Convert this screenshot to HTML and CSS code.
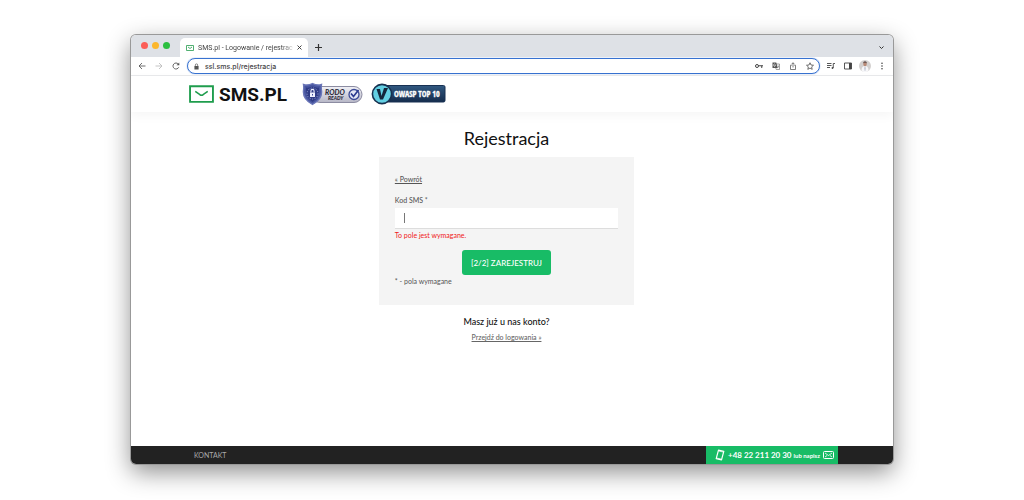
FILE: index.html
```html
<!DOCTYPE html>
<html lang="pl">
<head>
  <meta charset="UTF-8">
  <title>SMS.pl - Logowanie / rejestracja</title>
  <meta name="viewport" content="width=device-width, initial-scale=1.0">
  <link rel="stylesheet" href="styles.css">
</head>
<body>

  <div class="window">

    <!-- Tabs -->
    <div class="tabs">
      <div class="lights">
        <span class="light red"></span>
        <span class="light yellow"></span>
        <span class="light green"></span>
      </div>
      <div class="tab">
        <svg class="favicon" viewBox="0 0 24 18" fill="none" stroke="#35a35c" stroke-width="2.6"><path d="M1.5 1.5h21v15h-21zM6 6l6 4.500 6-4.500"/></svg>
        <span class="tab-title">SMS.pl - Logowanie / rejestrac</span>
        <button class="icon-btn" aria-label="Zamknij kartę"><svg class="small-icon" viewBox="0 0 10 10" fill="none" stroke="#333" stroke-width="1.800"><path d="M1 1l8 8M9 1l-8 8"/></svg></button>
      </div>
      <button class="icon-btn new-tab" aria-label="Nowa karta"><svg class="plus-icon" viewBox="0 0 10 10" fill="none" stroke="#333" stroke-width="1.700"><path d="M5 0v10M0 5h10"/></svg></button>
      <button class="icon-btn tabs-more" aria-label="Szukaj kart"><svg class="small-icon" viewBox="0 0 10 10" fill="none" stroke="#333" stroke-width="2"><path d="M1 3l4 4 4-4"/></svg></button>
    </div>

    <!-- Toolbar -->
    <div class="toolbar">
      <button class="icon-btn" aria-label="Wstecz"><svg class="icon" viewBox="0 0 16 16" fill="none" stroke="#555" stroke-width="1.700"><path d="M15 8H2M8 2L2 8l6 6"/></svg></button>
      <button class="icon-btn" aria-label="Dalej"><svg class="icon" viewBox="0 0 16 16" fill="none" stroke="#bbb" stroke-width="1.700"><path d="M1 8h13M8 2l6 6-6 6"/></svg></button>
      <button class="icon-btn" aria-label="Odśwież"><svg class="icon" viewBox="0 0 16 16" fill="none" stroke="#555" stroke-width="1.800"><path d="M13.500 10.500A6 6 0 1 1 12.500 4L14 6"/><path d="M14.500 1v5.500H9z" fill="#555" stroke="none"/></svg></button>
      <div class="address">
        <svg class="lock" viewBox="0 0 12 16" fill="#555"><path d="M1 6.500h10V15H1z"/><path d="M3.200 7V4.500a2.800 2.800 0 0 1 5.600 0V7" fill="none" stroke="#555" stroke-width="1.600"/></svg>
        <input class="url" type="text" value="ssl.sms.pl/rejestracja" aria-label="Adres strony">
        <button class="icon-btn" aria-label="Hasła"><svg class="icon" viewBox="0 0 16 16" fill="none" stroke="#444" stroke-width="2"><circle cx="4" cy="8" r="3"/><path d="M7 7.500h9M13.500 7.500V12"/></svg></button>
        <button class="icon-btn" aria-label="Przetłumacz"><svg class="icon" viewBox="0 0 16 16"><path d="M7.500 4H15v11H8.500l-1-3" fill="#fff" stroke="#666" stroke-width="1.200"/><path d="M1 1h7.500l3 11H1z" fill="#555"/><path d="M7 5a2.300 2.300 0 1 0 .3 2H5" fill="none" stroke="#fff" stroke-width="1.200"/><path d="M11 8h3M13.500 8c-.5 2-1.500 3.500-3 4.500" fill="none" stroke="#666"/></svg></button>
        <button class="icon-btn" aria-label="Udostępnij"><svg class="icon" viewBox="0 0 16 16" fill="none" stroke="#555" stroke-width="1.500"><path d="M5.500 6.500H3V15h10V6.500h-2.500M8 11V1.500M5 4.500l3-3 3 3"/></svg></button>
        <button class="icon-btn" aria-label="Dodaj zakładkę"><svg class="icon" viewBox="0 0 16 16" fill="none" stroke="#444" stroke-width="1.500"><path d="M8 1.500l2 4.500 5 .5-3.700 3.300 1.100 4.900L8 12.200l-4.400 2.500 1.100-4.900L1 6.500 6 6z"/></svg></button>
      </div>
      <button class="icon-btn" aria-label="Multimedia"><svg class="icon" viewBox="0 0 16 16" fill="none" stroke="#444" stroke-width="1.800"><path d="M0 3h9M0 7h9M0 11h6M12.500 12V3H16"/><circle cx="11" cy="12" r="1.800" fill="#444" stroke="none"/></svg></button>
      <button class="icon-btn" aria-label="Panel boczny"><svg class="icon" viewBox="0 0 16 16"><path d="M1 2h14v12H1z" fill="none" stroke="#444" stroke-width="1.800"/><path d="M10 2h5v12h-5z" fill="#444"/></svg></button>
      <button class="icon-btn profile" aria-label="Profil"><svg class="avatar" viewBox="0 0 24 24"><circle cx="12" cy="12" r="12" fill="#d3d0cf"/><path d="M5 22c0-7 2-10 7-10s7 3 7 10a12 12 0 0 1-14 0z" fill="#f7f7f9"/><path d="M12 12l1.500 4-1 6h-1l-1-6z" fill="#b6bccb"/><ellipse cx="12" cy="8" rx="3.500" ry="4.500" fill="#b98a76"/><path d="M8.300 7c0-6 7.400-6 7.400 0l-2-1.500H10z" fill="#5b4a48"/></svg></button>
      <button class="icon-btn" aria-label="Menu"><svg class="icon" viewBox="0 0 16 16" fill="#444"><circle cx="8" cy="2.500" r="1.600"/><circle cx="8" cy="8" r="1.600"/><circle cx="8" cy="13.500" r="1.600"/></svg></button>
    </div>

    <!-- Site header -->
    <header class="header">
      <a class="logo" href="#">
        <svg class="logo-icon" viewBox="0 0 24 17" fill="none" stroke="#1f9d4d"><path d="M1 1h22v15H1z" stroke-width="1.800"/><path d="M6 6l4.500 3.200q1.500 1 3 0L18 6" stroke-width="1.500"/></svg>
        SMS.PL
      </a>
      <svg class="badge-rodo" viewBox="0 0 62 24" role="img" aria-label="RODO Ready">
        <defs>
          <linearGradient id="silver" x1="0" y1="0" x2="0" y2="1"><stop offset="0" stop-color="#f1f1f6"/><stop offset="1" stop-color="#b6b6c6"/></linearGradient>
        </defs>
        <rect x="10" y="4.500" width="50" height="16" rx="8" fill="url(#silver)" stroke="#8c8ca2"/>
        <path d="M10.500 1.500Q15 4 19.500 2.500q-.5 3 0 6Q20.500 17 10.500 22.500.5 17 1.500 8.500q.5-3 0-6Q6 4 10.500 1.500z" fill="#4856a0" stroke="#6a76b8" stroke-width="1.400"/>
        <path d="M10.500 4.500q3.500 1.500 6.500 1Q18.500 15.500 10.500 20 2.500 15.500 4 5.500q3 .5 6.500-1z" fill="#2f3b86"/>
        <circle cx="10.500" cy="11.500" r="5.500" fill="none" stroke="#a5aedd" stroke-dasharray="1 1.600"/>
        <path d="M8 10.500h5V15H8z" fill="#eef0ff"/>
        <path d="M8.900 10.500V9a1.600 1.600 0 0 1 3.200 0v1.500" fill="none" stroke="#eef0ff" stroke-width="1.100"/>
        <path d="M10.500 12v1.500" stroke="#3c4a96"/>
        <text class="rodo-name" x="23" y="12.500">RODO</text>
        <text class="rodo-sub" x="26" y="17.500">READY</text>
        <circle cx="52" cy="12.500" r="5" fill="#e3e6f5" stroke="#3c4a96" stroke-width="1.300"/>
        <path d="M49 11.500l2.500 3 5-6.500" fill="none" stroke="#2b3b91" stroke-width="1.700"/>
      </svg>
      <svg class="badge-owasp" viewBox="0 0 76 22" role="img" aria-label="OWASP Top 10">
        <defs>
          <linearGradient id="navy" x1="0" y1="0" x2="0" y2="1"><stop offset="0" stop-color="#315981"/><stop offset="1" stop-color="#152c4d"/></linearGradient>
        </defs>
        <rect x="11" y="2.500" width="63" height="16.500" rx="1.500" fill="url(#navy)" stroke="#183153"/>
        <circle cx="11" cy="11" r="9.600" fill="#63cfe3" stroke="#17304f" stroke-width="1.600"/>
        <path d="M5.500 6H9l1.500 7L13 5h4l-5 11.500H9z" fill="#13263c"/>
        <text class="owasp-name" x="23" y="14">OWASP TOP 10</text>
      </svg>
    </header>

    <!-- Registration form -->
    <main class="main">
      <h1>Rejestracja</h1>
      <form class="card">
        <a class="back" href="#">« Powrót</a>
        <label for="code">Kod SMS *</label>
        <input class="code" id="code" type="text" aria-describedby="code-error">
        <p class="error" id="code-error">To pole jest wymagane.</p>
        <button class="submit" type="button">[2/2] ZAREJESTRUJ</button>
        <p class="note">* - pola wymagane</p>
      </form>
      <h2>Masz już u nas konto?</h2>
      <a class="login" href="#">Przejdź do logowania »</a>
    </main>

    <footer class="footer">
      <a class="contact" href="#">KONTAKT</a>
      <a class="phone" href="#">
        <svg class="phone-icon" viewBox="0 0 10 12" fill="none" stroke="#fff"><path d="M3.500 1.200l5.300 1.200-2.300 8.400-5.300-1.200z" stroke-width="1.200" stroke-linejoin="round"/><path d="M3.500 2l5 1.100M1.500 9l5 1.100" stroke-width=".7"/></svg>
        <span class="number">+48 22 211 20 30</span>
        <span class="write">lub napisz</span>
        <svg class="mail-icon" viewBox="0 0 11 8" fill="none" stroke="#fff"><rect x=".5" y=".5" width="10" height="7" rx="1"/><path d="M2 2l3.500 2.500L9 2M2 6l2-1.500M9 6L7 4.500" stroke-width=".8"/></svg>
      </a>
    </footer>
  </div>

</body>
</html>
```
FILE: styles.css
```css
* {
  box-sizing: border-box;
}

body {
  margin: 0;
  padding: 35px 131px 36px;
  min-height: 100vh;
  display: flex;
  background: #fff;
  color: #111;
  font-family: Lato, "Liberation Sans", sans-serif;
}

h1, h2, p {
  margin: 0;
  font-weight: 400;
}

.window {
  flex: 1;
  display: flex;
  flex-direction: column;
  overflow: hidden;
  background: #fff;
  border-radius: 5px;
  box-shadow: 0 0 0 1px #999, 0 8px 24px rgba(0, 0, 0, 0.45);
}

/* Buttons and icons */
.icon-btn {
  display: flex;
  padding: 0;
  border: none;
  background: none;
}

.icon {
  width: 8px;
  height: 8px;
}

.small-icon {
  width: 5px;
  height: 5px;
}

.plus-icon {
  width: 7px;
  height: 7px;
}

/* Tabs */
.tabs {
  display: flex;
  align-items: flex-end;
  height: 22px;
  padding: 0 9px 0 10px;
  background: #dee1e6;
}

.lights {
  display: flex;
  gap: 4px;
  margin-right: 10px;
  padding-bottom: 8px;
}

.light {
  width: 7px;
  height: 7px;
  border-radius: 50%;
}

.red {
  background: #fb5d57;
}

.yellow {
  background: #fcb72d;
}

.green {
  background: #2bbf40;
}

.tab {
  display: flex;
  align-items: center;
  gap: 4px;
  height: 19px;
  padding: 0 6px;
  background: #fff;
  border-radius: 5px 5px 0 0;
  font: 7px Roboto, sans-serif;
  color: #444;
}

.favicon {
  flex: none;
  width: 8px;
  height: 6px;
}

.tab-title {
  white-space: nowrap;
  mask-image: linear-gradient(to right, #000 88%, rgba(0, 0, 0, 0.2));
}

.new-tab {
  margin-left: 7px;
  padding-bottom: 6px;
}

.tabs-more {
  margin-left: auto;
  padding-bottom: 7px;
}

/* Toolbar */
.toolbar {
  display: flex;
  align-items: center;
  gap: 9px;
  height: 19px;
  padding: 0 7px;
  border-bottom: 1px solid #e8e9eb;
}

.address {
  flex: 1;
  display: flex;
  align-items: center;
  gap: 9px;
  height: 16px;
  margin: 0 -2px;
  padding: 0 5px 0 6px;
  border: 1px solid #3872d0;
  border-radius: 8px;
  box-shadow: 0 0 1px #3872d0;
}

.lock {
  width: 5px;
  height: 7px;
}

.url {
  flex: 1;
  min-width: 0;
  height: 12px;
  margin-left: -3px;
  padding: 0;
  border: none;
  outline: none;
  background: none;
  color: #444;
  font: 500 7px Inter, Roboto, sans-serif;
}

.profile {
  margin: 0 -2px;
}

.avatar {
  width: 12px;
  height: 12px;
}

/* Site header */
.header {
  display: flex;
  align-items: center;
  height: 36px;
  padding: 0 58px;
  box-shadow: 0 4px 10px rgba(0, 0, 0, 0.04);
}

.logo {
  display: flex;
  align-items: center;
  gap: 5px;
  margin-right: 15px;
  color: #111;
  font: 700 19px Roboto, sans-serif;
  text-decoration: none;
}

.logo-icon {
  width: 25px;
  height: 18px;
}

.badge-rodo {
  width: 62px;
  height: 24px;
  margin-right: 7px;
}

.badge-owasp {
  width: 76px;
  height: 22px;
}

.rodo-name {
  font: italic 900 7px Lato, sans-serif;
  fill: #2b2b38;
}

.rodo-sub {
  font: italic 900 5px Lato, sans-serif;
  fill: #2b2b38;
}

.owasp-name {
  font: 700 8px "Liberation Sans Narrow", "Open Sans Condensed", Roboto, sans-serif;
  fill: #fff;
  stroke: #fff;
  stroke-width: 0.3;
}

/* Registration form */
.main {
  flex: 1;
  display: flex;
  flex-direction: column;
  align-items: center;
  padding: 15px 11px 0 0;
}

h1 {
  margin-bottom: 7px;
  font-size: 18px;
  line-height: 23px;
}

.card {
  display: flex;
  flex-direction: column;
  align-items: flex-start;
  width: 34%;
  padding: 16px 16px 18px;
  background: #f4f4f4;
  color: #555;
  font-size: 7px;
  font-weight: 500;
  line-height: 12px;
}

.back {
  margin-bottom: 9px;
  color: #555;
}

.code {
  width: 100%;
  height: 21px;
  margin-top: 2px;
  padding: 0 9px;
  border: none;
  border-bottom: 1px solid #ddd;
  outline: none;
  background: linear-gradient(#777, #777) 9px 5px / 1px 10px no-repeat #fff;
  font: 8px Lato, sans-serif;
}

.error {
  color: #f01818;
}

.submit {
  align-self: center;
  height: 25px;
  margin-top: 9px;
  padding: 0 9px;
  border: none;
  border-radius: 3px;
  background: #18bc66;
  color: #fff;
  font: 500 8px Lato, sans-serif;
}

h2 {
  margin: 11px 0 3px;
  font-size: 9px;
  font-weight: 500;
  line-height: 12px;
}

.login {
  color: #666;
  font-size: 7px;
  font-weight: 500;
  line-height: 12px;
}

/* Footer */
.footer {
  display: flex;
  justify-content: space-between;
  align-items: center;
  height: 18px;
  padding: 0 55px 0 63px;
  background: #222;
  font-size: 7px;
}

.contact {
  color: #aaa;
  text-decoration: none;
}

.phone {
  display: flex;
  align-items: center;
  height: 100%;
  padding: 0 4px 0 9px;
  background: #18bc66;
  color: #fff;
  text-decoration: none;
}

.phone-icon {
  width: 10px;
  height: 12px;
  margin-right: 3px;
}

.number {
  margin-right: 2px;
  font-size: 8px;
  font-weight: 700;
}

.write {
  font-size: 6px;
  font-weight: 700;
}

.mail-icon {
  width: 11px;
  height: 8px;
  margin-left: 3px;
}
```
